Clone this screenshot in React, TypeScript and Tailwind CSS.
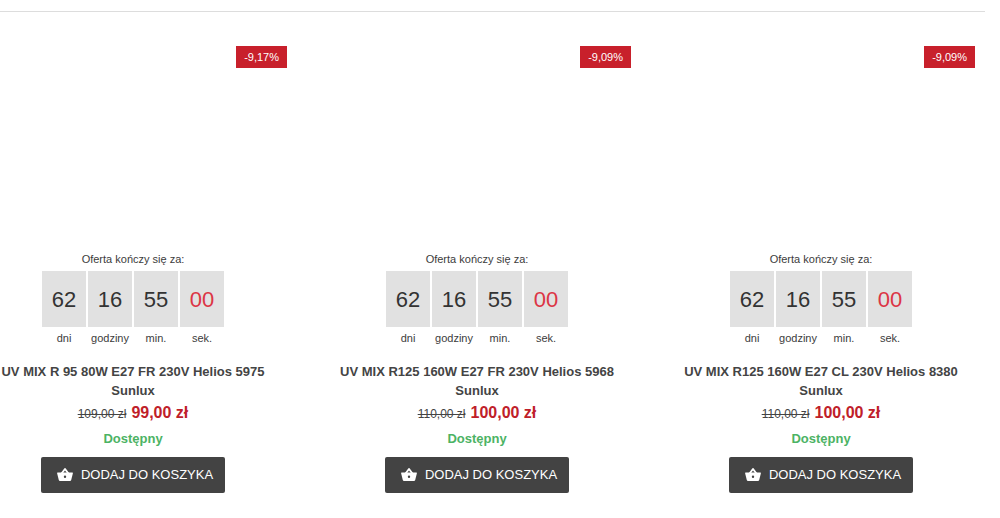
import React from 'react';

interface Product {
  name: string;
  discount: string;
  oldPrice: string;
  price: string;
}

const products: Product[] = [
  { name: 'UV MIX R 95 80W E27 FR 230V Helios 5975 Sunlux', discount: '-9,17%', oldPrice: '109,00 zł', price: '99,00 zł' },
  { name: 'UV MIX R125 160W E27 FR 230V Helios 5968 Sunlux', discount: '-9,09%', oldPrice: '110,00 zł', price: '100,00 zł' },
  { name: 'UV MIX R125 160W E27 CL 230V Helios 8380 Sunlux', discount: '-9,09%', oldPrice: '110,00 zł', price: '100,00 zł' },
];

const countdown = [
  { value: '62', label: 'dni' },
  { value: '16', label: 'godziny' },
  { value: '55', label: 'min.' },
  { value: '00', label: 'sek.' },
];

const BasketIcon: React.FC = () => (
  <svg viewBox="0 0 16 16" className="h-4 w-4" fill="none" aria-hidden="true">
    <path d="M4.6 6.5 8 2l3.4 4.5" stroke="currentColor" strokeWidth="1.9" strokeLinejoin="round" />
    <path
      fill="currentColor"
      fillRule="evenodd"
      d="M.6 5.600h14.800c.4 0 .6.3.5.7l-1.700 6.800c-.2.6-.6.9-1.200.9H3c-.6 0-1-.3-1.200-.9L.1 6.300C0 5.900.2 5.600.6 5.600ZM8 8.500a1.200 1.200 0 1 0 0 2.400 1.200 1.200 0 0 0 0-2.400Z"
    />
  </svg>
);

const Countdown: React.FC = () => (
  <div className="flex flex-col items-center text-[#3c3c3c]">
    <p className="text-[11px] leading-4">Oferta kończy się za:</p>
    <div className="mt-1 grid grid-cols-4 gap-0.5">
      {countdown.map((item) => (
        <div key={item.label} className="w-11 text-center">
          <div
            className={`flex h-14 items-center justify-center bg-[#e1e1e1] text-[22px] ${
              item.label === 'sek.' ? 'text-[#dc3545]' : 'text-[#333333]'
            }`}
          >
            {item.value}
          </div>
          <div className="mt-[3px] text-[11px] leading-4">{item.label}</div>
        </div>
      ))}
    </div>
  </div>
);

const ProductCard: React.FC<{ product: Product }> = ({ product }) => (
  <article className="flex flex-col items-center px-[18px]">
    <span className="self-end bg-[#c8202b] px-2 py-1 text-[11px] leading-[14px] text-white">{product.discount}</span>
    <div className="h-[183px]" />
    <Countdown />
    <h2 className="mt-4 w-72 text-center text-[13px] leading-[19px] font-bold text-[#444444]">
      <a href="#product">{product.name}</a>
    </h2>
    <p className="mt-px flex items-baseline gap-[5px] leading-6">
      <s className="text-xs text-[#444444]">{product.oldPrice}</s>
      <strong className="text-base leading-6 text-[#bf2029]">{product.price}</strong>
    </p>
    <p className="mt-1 text-[13px] leading-5 font-bold text-[#4cb364]">Dostępny</p>
    <button
      type="button"
      className="mt-2 flex h-9 items-center gap-2 rounded-xs bg-[#434343] pr-3 pl-4 text-[13px] text-white hover:bg-black"
    >
      <BasketIcon />
      DODAJ DO KOSZYKA
    </button>
  </article>
);

const App: React.FC = () => {
  return (
    <main className="overflow-hidden bg-white pt-[11px] pb-6 font-['Liberation_Sans',Arial,sans-serif]">
      <hr className="mr-[15px] border-[#dddddd]" />
      <section className="mt-[34px] mr-[7px] -ml-[39px] grid grid-cols-3">
        {products.map((product) => (
          <ProductCard key={product.name} product={product} />
        ))}
      </section>
    </main>
  );
};

export default App;
